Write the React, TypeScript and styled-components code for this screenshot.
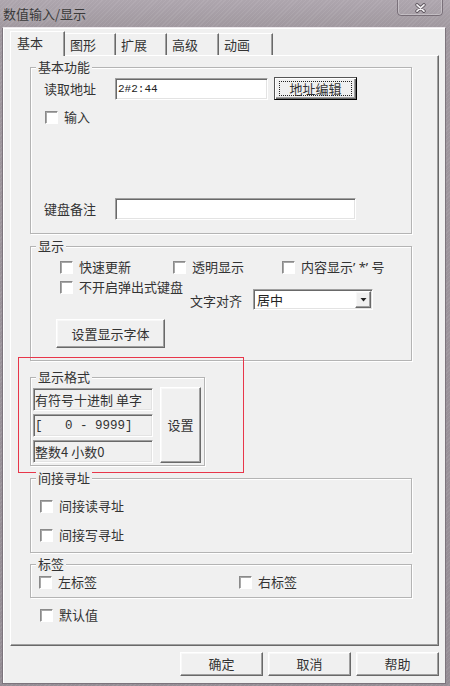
import React from "react";
import styled, { createGlobalStyle, css } from "styled-components";

const GlobalStyle = createGlobalStyle`
  *, *::before, *::after { box-sizing: border-box; }
  html, body { margin: 0; padding: 0; }
  body {
    background: #9a929a;
    font-family: "Noto Sans CJK SC", "Noto Sans", "Liberation Sans", sans-serif;
    font-size: 13px;
    color: #333;
  }
`;

const Window = styled.div`
  width: 450px;
  height: 686px;
  display: flex;
  flex-direction: column;
  overflow: hidden;
  background:
    repeating-linear-gradient(135deg, rgba(255,255,255,0.07) 0 1px, rgba(0,0,0,0) 1px 3px),
    linear-gradient(180deg, #aea6ae 0px, #a0989f 27px, #958d95 100%);
`;

const TitleBar = styled.div`
  height: 27px;
  flex: none;
  display: flex;
  align-items: flex-start;
  padding-left: 3px;
`;

const Title = styled.span`
  margin-top: 5px;
  font-size: 13px;
  line-height: 17px;
  color: #3a3a3a;
  text-shadow: 0 0 6px rgba(255,255,255,0.3);
`;

const CloseButton = styled.div`
  margin-left: auto;
  margin-right: 7px;
  margin-top: -3px;
  width: 46px;
  height: 19px;
  padding-top: 3px;
  border: 1px solid rgba(80,70,80,0.55);
  border-radius: 0 0 4px 4px;
  box-shadow: inset 0 0 0 1px rgba(255,255,255,0.3);
  display: flex;
  align-items: center;
  justify-content: center;
`;

const Client = styled.div`
  flex: 1;
  margin: 0 4px 2px 2px;
  background: #f0f0f0;
  border: 1px solid #7c747c;
  border-top-color: #ebe7eb;
  box-shadow: inset 1px 1px 0 #fff;
  display: flex;
  flex-direction: column;
  padding: 3px 0 0 7px;
`;

const TabRow = styled.div`
  height: 24px;
  flex: none;
  display: flex;
  align-items: flex-end;
`;

const Tab = styled.div<{ $w: number; $active?: boolean }>`
  width: ${(p) => p.$w}px;
  height: 22px;
  flex: none;
  padding-left: 5px;
  display: flex;
  align-items: center;
  background: #f0f0f0;
  border-top: 1px solid #fff;
  border-right: 1px solid #696969;
  box-shadow: inset -1px 0 0 #a0a0a0;
  line-height: 16px;
  color: #333;
  ${(p) =>
    p.$active &&
    css`
      height: 25px;
      margin-bottom: -1px;
      padding-left: 6px;
      padding-bottom: 3px;
      border-left: 1px solid #fff;
      position: relative;
      z-index: 1;
    `}
`;

const Panel = styled.div`
  width: 429px;
  height: 591px;
  flex: none;
  border: 1px solid;
  border-color: #fff #696969 #696969 #fff;
  box-shadow: inset -1px -1px 0 #a0a0a0;
  padding: 0 26px 0 19px;
  display: flex;
  flex-direction: column;
`;

const Group = styled.div<{ $h: number; $mt: number; $w?: number; $mark?: boolean; $pad: string; $row?: boolean }>`
  position: relative;
  flex: none;
  height: ${(p) => p.$h}px;
  margin-top: ${(p) => p.$mt}px;
  ${(p) => (p.$w ? `width: ${p.$w}px;` : "")}
  padding: ${(p) => p.$pad};
  border: 1px solid #b4b4b4;
  box-shadow: inset 1px 1px 0 #fff, 1px 1px 0 #fff;
  display: flex;
  flex-direction: ${(p) => (p.$row ? "row" : "column")};
  align-items: flex-start;
  ${(p) =>
    p.$mark &&
    css`
      &::after {
        content: "";
        position: absolute;
        top: -21px;
        left: -13px;
        right: -40px;
        bottom: -8px;
        border: 1px solid #e8364a;
        pointer-events: none;
      }
    `}
`;

const Legend = styled.span`
  position: absolute;
  top: -10px;
  left: 5px;
  padding: 0 2px;
  background: #f0f0f0;
  line-height: 17px;
  color: #333;
`;

const FieldRow = styled.div<{ $push?: boolean }>`
  display: flex;
  align-items: center;
  height: 23px;
  ${(p) => p.$push && "margin-top: auto;"}
`;

const FieldLabel = styled.span<{ $w: number; $pt?: number }>`
  width: ${(p) => p.$w}px;
  flex: none;
  line-height: 16px;
  padding-top: ${(p) => p.$pt || 0}px;
  white-space: nowrap;
`;

const sunken = css`
  border: 1px solid;
  border-color: #a0a0a0 #fff #fff #a0a0a0;
  box-shadow: inset 1px 1px 0 #696969, inset -1px -1px 0 #e3e3e3;
`;

const raised = css`
  border: 1px solid;
  border-color: #fff #696969 #696969 #fff;
  box-shadow: inset -1px -1px 0 #a0a0a0, inset 1px 1px 0 #f8f8f8;
`;

const TextInput = styled.input<{ $w: number }>`
  width: ${(p) => p.$w}px;
  height: 22px;
  flex: none;
  margin: 0;
  padding: 0 0 0 2px;
  background: #fff;
  ${sunken}
  font-family: "Liberation Mono", "DejaVu Sans Mono", monospace;
  font-size: 11px;
  color: #222;
  outline: none;
`;

const Button = styled.button<{ $w: number; $h: number }>`
  width: ${(p) => p.$w}px;
  height: ${(p) => p.$h}px;
  flex: none;
  margin: 0;
  padding: 0;
  background: #f0f0f0;
  ${raised}
  font-family: "Noto Sans CJK SC", "Noto Sans", sans-serif;
  font-size: 13px;
  line-height: 16px;
  color: #333;
`;

const DefaultButton = styled(Button)`
  position: relative;
  border: 1px solid #000;
  border-top-color: #555;
  border-left-color: #555;
  box-shadow: inset 1px 1px 0 #fff, inset -1px -1px 0 #696969, inset -2px -2px 0 #a0a0a0;
  &::after {
    content: "";
    position: absolute;
    top: 3px;
    left: 4px;
    right: 4px;
    bottom: 3px;
    border: 1px dotted #222;
  }
`;

const Row = styled.div<{ $pl?: number; $mt?: number; $gap?: number; $col?: boolean; $start?: boolean }>`
  display: flex;
  flex-direction: ${(p) => (p.$col ? "column" : "row")};
  align-items: ${(p) => (p.$start ? "flex-start" : "center")};
  padding-left: ${(p) => p.$pl || 0}px;
  margin-top: ${(p) => p.$mt || 0}px;
  gap: ${(p) => p.$gap || 0}px;
`;

const CheckWrap = styled.label<{ $w?: number; $mt?: number; $ml?: number; $latin?: boolean }>`
  display: flex;
  align-items: center;
  gap: 6px;
  height: 16px;
  flex: none;
  ${(p) => (p.$w ? `width: ${p.$w}px;` : "")}
  margin-top: ${(p) => p.$mt || 0}px;
  margin-left: ${(p) => p.$ml || 0}px;
  line-height: 16px;
  white-space: pre;
  color: #333;
  ${(p) =>
    p.$latin &&
    css`
      font-family: "Noto Sans", "Noto Sans CJK SC", sans-serif;
    `}
`;

const Box = styled.span`
  width: 13px;
  height: 13px;
  flex: none;
  background: #fff;
  border: 1px solid;
  border-color: #8a8a8a #fff #fff #8a8a8a;
  box-shadow: inset 1px 1px 0 #a8a8a8;
`;

const Select = styled.div`
  width: 120px;
  height: 21px;
  flex: none;
  display: flex;
  align-items: center;
  padding-left: 3px;
  background: #fff;
  ${sunken}
`;

const SelectText = styled.span`
  flex: 1;
  line-height: 16px;
  color: #222;
`;

const DropBtn = styled.span`
  width: 16px;
  height: 17px;
  margin-right: 1px;
  flex: none;
  background: #f0f0f0;
  ${raised}
  display: flex;
  align-items: center;
  justify-content: center;
`;

const FieldsCol = styled.div`
  width: 120px;
  flex: none;
  display: flex;
  flex-direction: column;
  gap: 3px;
`;

const ReadField = styled.div<{ $mono?: boolean }>`
  height: 23px;
  display: flex;
  align-items: center;
  padding-left: 1px;
  background: #f0f0f0;
  ${sunken}
  line-height: 16px;
  white-space: pre;
  color: #333;
  ${(p) =>
    p.$mono &&
    css`
      font-family: "Liberation Mono", "DejaVu Sans Mono", monospace;
      font-size: 12.5px;
    `}
`;

const SideButton = styled(Button)`
  margin-left: 7px;
  margin-top: -1px;
`;

const ButtonRow = styled.div`
  width: 429px;
  flex: none;
  margin-top: 6px;
  display: flex;
  justify-content: flex-end;
  gap: 5px;
`;

const Check: React.FC<{ label: string; w?: number; mt?: number; ml?: number; latin?: boolean }> = ({
  label,
  w,
  mt,
  ml,
  latin,
}) => (
  <CheckWrap $w={w} $mt={mt} $ml={ml} $latin={latin}>
    <Box />
    <span>{label}</span>
  </CheckWrap>
);

export default function App() {
  const tabs: [string, number][] = [
    ["基本", 55],
    ["图形", 51],
    ["扩展", 51],
    ["高级", 52],
    ["动画", 54],
  ];
  return (
    <>
      <GlobalStyle />
      <Window>
        <TitleBar>
          <Title>数值输入/显示</Title>
          <CloseButton>
            <svg width="11" height="10" viewBox="0 0 11 10">
              <path d="M2 1.8 L9 8.2 M9 1.8 L2 8.2" stroke="#5a525a" strokeWidth="3.4" strokeLinecap="round" />
              <path d="M2 1.8 L9 8.2 M9 1.8 L2 8.2" stroke="#f4f2f4" strokeWidth="1.7" strokeLinecap="round" />
            </svg>
          </CloseButton>
        </TitleBar>
        <Client>
          <TabRow>
            {tabs.map(([t, w], i) => (
              <Tab key={t} $w={w} $active={i === 0}>
                {t}
              </Tab>
            ))}
          </TabRow>
          <Panel>
            <Group $h={167} $mt={11} $pad="9px 0 13px 13px">
              <Legend>基本功能</Legend>
              <FieldRow>
                <FieldLabel $w={71}>读取地址</FieldLabel>
                <TextInput $w={153} readOnly value="2#2:44" />
                <DefaultButton $w={83} $h={23} style={{ marginLeft: 6 }}>
                  地址编辑
                </DefaultButton>
              </FieldRow>
              <Check label="输入" mt={9} ml={1} />
              <FieldRow $push>
                <FieldLabel $w={71}>键盘备注</FieldLabel>
                <TextInput $w={241} readOnly value="" />
              </FieldRow>
            </Group>

            <Group $h={115} $mt={12} $pad="12px 0 0 25px">
              <Legend>显示</Legend>
              <Row $pl={4}>
                <Check label="快速更新" w={113} />
                <Check label="透明显示" w={109} />
                <Check label="内容显示’ *’ 号" latin />
              </Row>
              <Row $pl={4} $mt={4} $start>
                <Check label="不开启弹出式键盘" w={130} />
                <Row $mt={10}>
                  <FieldLabel $w={63} $pt={3}>
                    文字对齐
                  </FieldLabel>
                  <Select>
                    <SelectText>居中</SelectText>
                    <DropBtn>
                      <svg width="7" height="6" viewBox="0 0 7 6">
                        <path d="M0.5 1 H6.5 L3.5 4.5 Z" fill="#222" />
                      </svg>
                    </DropBtn>
                  </Select>
                </Row>
              </Row>
              <Button $w={109} $h={29} style={{ marginTop: 9 }}>
                设置显示字体
              </Button>
            </Group>

            <Group $h={89} $mt={16} $w={175} $mark $row $pad="10px 0 0 2px">
              <Legend>显示格式</Legend>
              <FieldsCol>
                <ReadField>有符号十进制 单字</ReadField>
                <ReadField $mono>{"[   0 - 9999]"}</ReadField>
                <ReadField>整数4 小数0</ReadField>
              </FieldsCol>
              <SideButton $w={41} $h={76}>
                设置
              </SideButton>
            </Group>

            <Group $h={75} $mt={12} $pad="19px 0 0 9px">
              <Legend>间接寻址</Legend>
              <Row $col $gap={13} $start>
                <Check label="间接读寻址" />
                <Check label="间接写寻址" />
              </Row>
            </Group>

            <Group $h={34} $mt={11} $pad="9px 0 0 8px">
              <Legend>标签</Legend>
              <Row>
                <Check label="左标签" w={200} />
                <Check label="右标签" />
              </Row>
            </Group>

            <Check label="默认值" mt={9} ml={10} />
          </Panel>
          <ButtonRow>
            <Button $w={83} $h={24}>确定</Button>
            <Button $w={83} $h={24}>取消</Button>
            <Button $w={83} $h={24}>帮助</Button>
          </ButtonRow>
        </Client>
      </Window>
    </>
  );
}
